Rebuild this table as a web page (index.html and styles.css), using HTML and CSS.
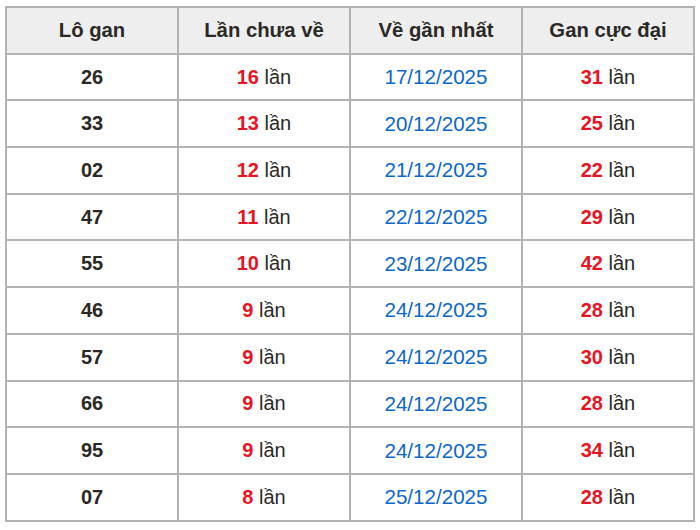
FILE: index.html
```html
<!DOCTYPE html>
<html lang="vi">
<head>
<meta charset="utf-8">
<link rel="stylesheet" href="styles.css">
</head>
<body>
<table class="gan">
<thead>
<tr><th>Lô gan</th><th>Lần chưa về</th><th>Về gần nhất</th><th>Gan cực đại</th></tr>
</thead>
<tbody>
<tr><td class="lo">26</td><td><b class="red">16</b> lần</td><td class="date">17/12/2025</td><td><b class="red">31</b> lần</td></tr>
<tr><td class="lo">33</td><td><b class="red">13</b> lần</td><td class="date">20/12/2025</td><td><b class="red">25</b> lần</td></tr>
<tr><td class="lo">02</td><td><b class="red">12</b> lần</td><td class="date">21/12/2025</td><td><b class="red">22</b> lần</td></tr>
<tr><td class="lo">47</td><td><b class="red">11</b> lần</td><td class="date">22/12/2025</td><td><b class="red">29</b> lần</td></tr>
<tr><td class="lo">55</td><td><b class="red">10</b> lần</td><td class="date">23/12/2025</td><td><b class="red">42</b> lần</td></tr>
<tr><td class="lo">46</td><td><b class="red">9</b> lần</td><td class="date">24/12/2025</td><td><b class="red">28</b> lần</td></tr>
<tr><td class="lo">57</td><td><b class="red">9</b> lần</td><td class="date">24/12/2025</td><td><b class="red">30</b> lần</td></tr>
<tr><td class="lo">66</td><td><b class="red">9</b> lần</td><td class="date">24/12/2025</td><td><b class="red">28</b> lần</td></tr>
<tr><td class="lo">95</td><td><b class="red">9</b> lần</td><td class="date">24/12/2025</td><td><b class="red">34</b> lần</td></tr>
<tr><td class="lo">07</td><td><b class="red">8</b> lần</td><td class="date">25/12/2025</td><td><b class="red">28</b> lần</td></tr>
</tbody>
</table>
</body>
</html>
```
FILE: styles.css
```css
html, body {
  margin: 0;
  padding: 0;
  background: #ffffff;
}
body {
  font-family: "Liberation Sans", Arial, sans-serif;
  color: #2b2925;
}
.gan {
  margin: 6px 0 0 5px;
  width: 690px;
  border-collapse: collapse;
  table-layout: fixed;
  font-size: 20px;
}
.gan th, .gan td {
  border: 2px solid #b3b3b3;
  text-align: center;
  padding: 0;
  height: 44.7px;
}
.gan th {
  background: #eeeeee;
  font-weight: bold;
  color: #2b2925;
  font-size: 20.3px;
}
.lo {
  font-weight: bold;
}
.red {
  color: #e8141f;
  font-weight: bold;
}
.date {
  color: #0d67c9;
  font-size: 20.6px;
}
```
